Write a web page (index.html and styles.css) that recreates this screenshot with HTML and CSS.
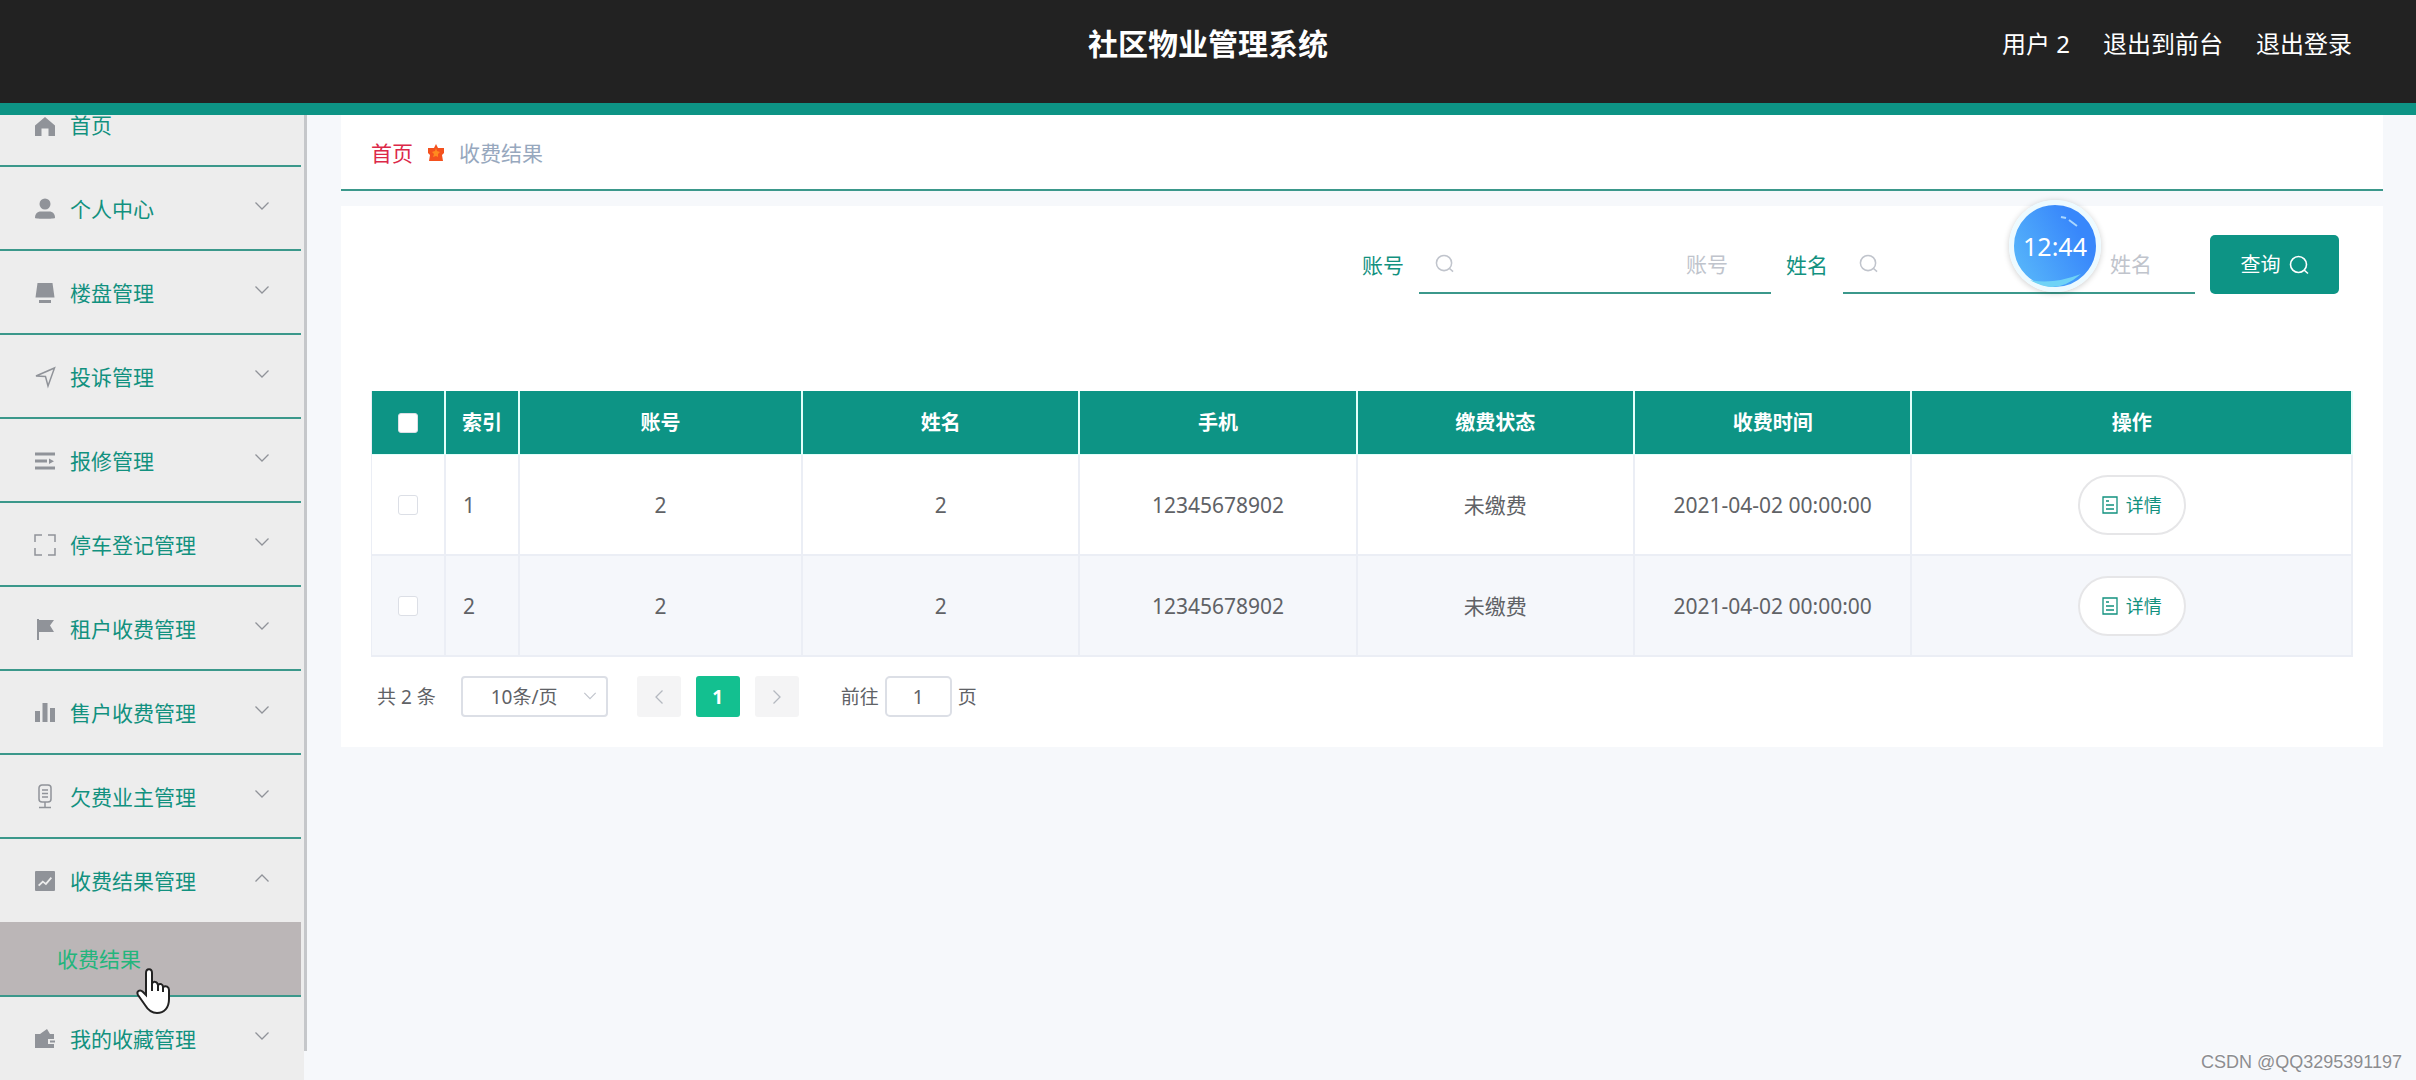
FILE: index.html
```html
<!DOCTYPE html>
<html lang="zh-CN">
<head>
<meta charset="utf-8">
<title>社区物业管理系统</title>
<link rel="stylesheet" href="styles.css">
</head>
<body>
<svg class="defs" aria-hidden="true">
  <symbol id="down" viewBox="0 0 16 16"><path d="M1.500 4.500 8 11l6.500-6.500" fill="none" stroke="currentColor" stroke-width="1.300"/></symbol>
  <symbol id="search" viewBox="0 0 20 20"><circle cx="9.500" cy="9.500" r="8" fill="none" stroke="currentColor" stroke-width="1.600"/><path d="m15 15 4 3.500" fill="none" stroke="currentColor" stroke-width="1.600"/></symbol>
  <symbol id="doc" viewBox="0 0 16 18"><path d="M1 1h14v16H1zM4 5h3M4 9h8M4 13h8" fill="none" stroke="currentColor" stroke-width="1.300"/></symbol>
</svg>
<header class="topbar">
  <h1 class="title">社区物业管理系统</h1>
  <nav class="user">
    <span>用户 2</span>
    <a href="#">退出到前台</a>
    <a href="#">退出登录</a>
  </nav>
</header>
<div class="layout">
  <aside class="sidebar">
    <nav class="menu">
      <a class="item" href="#"><svg class="icon" viewBox="0 0 20 20"><path d="M10 0 20 8.500V19h-6.500v-7.500h-7V19H0V8.500z"/></svg><span>首页</span></a>
      <a class="item" href="#"><svg class="icon" viewBox="0 0 20 20"><circle cx="10" cy="5" r="5.500"/><path d="M0 19c0-4 2-6.500 6-6.500h8c4 0 6 2.500 6 6.500 0 1-20 1-20 0z"/></svg><span>个人中心</span><svg class="arrow"><use href="#down"/></svg></a>
      <a class="item" href="#"><svg class="icon" viewBox="0 0 20 20"><path d="M2.500 0h15l2 14.500h-19zM4 17h12v3H4z"/></svg><span>楼盘管理</span><svg class="arrow"><use href="#down"/></svg></a>
      <a class="item" href="#"><svg class="icon line" viewBox="0 0 20 20"><path d="M1 9 19.500 1 13 19l-2.500-9.500z"/></svg><span>投诉管理</span><svg class="arrow"><use href="#down"/></svg></a>
      <a class="item" href="#"><svg class="icon" viewBox="0 0 20 20"><path d="M0 1.500h20v3H0zM0 8.500h12v3H0zM14 7.500l5 2.700-5 2.700zM0 15.500h20v3H0z"/></svg><span>报修管理</span><svg class="arrow"><use href="#down"/></svg></a>
      <a class="item" href="#"><svg class="icon line" viewBox="0 0 20 20"><path d="M0 7V0h7M13 0h7v7M20 13v7h-7M7 20H0v-7"/></svg><span>停车登记管理</span><svg class="arrow"><use href="#down"/></svg></a>
      <a class="item" href="#"><svg class="icon" viewBox="0 0 20 20"><path d="M2 0h2v1h15l-4 5.500L19 13H4v8H2z"/></svg><span>租户收费管理</span><svg class="arrow"><use href="#down"/></svg></a>
      <a class="item" href="#"><svg class="icon" viewBox="0 0 20 20"><path d="M0 8h5v11H0zM7.500 0h5v19h-5zM15 5h5v14h-5z"/></svg><span>售户收费管理</span><svg class="arrow"><use href="#down"/></svg></a>
      <a class="item" href="#"><svg class="icon line" viewBox="0 0 20 20"><rect x="4" y="-2" width="12" height="17" rx="3"/><path d="M7 3h6M7 6.500h6M7 10h6M10 15v5M4 20.500h12"/></svg><span>欠费业主管理</span><svg class="arrow"><use href="#down"/></svg></a>
      <a class="item open" href="#"><svg class="icon" viewBox="0 0 20 20"><path fill-rule="evenodd" d="M1 0h18q1 0 1 1v18q0 1-1 1H1q-1 0-1-1V1q0-1 1-1zM3 14l1.300 1.300 3.700-3.500 3 2.500 6-7-1.300-1.200-5 5.700-3-2.400z"/></svg><span>收费结果管理</span><svg class="arrow up"><use href="#down"/></svg></a>
      <a class="subitem" href="#">收费结果
        <svg class="cursor" viewBox="0 0 34 46"><path d="M10 27V5c0-5 6-5 6 0v11c1-3 5-3 6 1 2-2 5-1 5 2 3-2 6 0 6 3v9c0 9-5 14-12 14-6 0-9-3-12-8L2 27c-2-4 2-6 5-3z" fill="#fff" stroke="#222" stroke-width="2"/><path d="M16 15v8M22 17v6M27 19v5" stroke="#222" stroke-width="2"/></svg>
      </a>
      <a class="item" href="#"><svg class="icon" viewBox="0 0 20 20"><path d="M0 5h5l7-5 3 5h4v5h-6v5h6v4H0zM15 11.500h5v2h-5z"/></svg><span>我的收藏管理</span><svg class="arrow"><use href="#down"/></svg></a>
    </nav>
    <div class="scrollbar"></div>
  </aside>
  <main class="main">
    <nav class="crumbs">
      <a href="#">首页</a>
      <svg viewBox="0 0 18 18"><path d="m9 0 2 4h6v5l-2 2 1 6H2l1-6-2-2V4h6z" fill="#f4511e"/><path d="m9 4 1 3 3 1-2 2v3l-2-1-3 1 1-3-2-2 3-1z" fill="#ff8a1f"/></svg>
      <span>收费结果</span>
    </nav>
    <section class="card">
      <form class="search">
        <label for="account">账号</label>
        <div class="field"><svg><use href="#search"/></svg><input id="account" type="text" placeholder="账号"></div>
        <label for="name">姓名</label>
        <div class="field"><svg><use href="#search"/></svg><input id="name" type="text" placeholder="姓名">
          <div class="clock"><svg class="shine" viewBox="0 0 82 82"><path d="M16 75Q38 80 67 69Q52 82 38 82Q26 81 16 75z" fill="#6fd3f6"/><path d="m47 12 5 1M55 15l8 6" fill="none" stroke="#a9d6ff" stroke-width="2"/></svg><span>12:44</span></div></div>
        <button class="query" type="button">查询<svg><use href="#search"/></svg></button>
      </form>
      <table class="data">
        <colgroup><col class="c-narrow"><col class="c-narrow"><col class="c-account"><col class="c-mid"><col class="c-mid"><col class="c-mid"><col class="c-mid"><col></colgroup>
        <thead><tr><th><input type="checkbox" aria-label="全选"></th><th>索引</th><th>账号</th><th>姓名</th><th>手机</th><th>缴费状态</th><th>收费时间</th><th>操作</th></tr></thead>
        <tbody>
          <tr><td><input type="checkbox" aria-label="选择 1"></td><td class="index">1</td><td>2</td><td>2</td><td>12345678902</td><td>未缴费</td><td>2021-04-02 00:00:00</td><td><button class="detail" type="button"><svg><use href="#doc"/></svg>详情</button></td></tr>
          <tr><td><input type="checkbox" aria-label="选择 2"></td><td class="index">2</td><td>2</td><td>2</td><td>12345678902</td><td>未缴费</td><td>2021-04-02 00:00:00</td><td><button class="detail" type="button"><svg><use href="#doc"/></svg>详情</button></td></tr>
        </tbody>
      </table>
      <div class="pager">
        <span>共 2 条</span>
        <div class="size"><select aria-label="每页条数"><option>10条/页</option></select><svg><use href="#down"/></svg></div>
        <div class="pages">
          <button type="button" aria-label="上一页"><svg class="left"><use href="#down"/></svg></button>
          <button type="button" class="current">1</button>
          <button type="button" aria-label="下一页"><svg class="right"><use href="#down"/></svg></button>
        </div>
        <div class="jump"><label for="page">前往</label><input id="page" type="text" value="1"><span>页</span></div>
      </div>
    </section>
  </main>
</div>
<div class="watermark">CSDN @QQ3295391197</div>
</body>
</html>
```
FILE: styles.css
```css
* { box-sizing: border-box; }
body {
  margin: 0;
  height: 100vh;
  display: flex;
  flex-direction: column;
  background: #f6f8fb;
  color: #606266;
  font: 21px/30px "Noto Sans", "Noto Sans CJK SC", sans-serif;
}
a { color: inherit; text-decoration: none; }
button, input, select { font: inherit; color: inherit; margin: 0; }
.defs { display: none; }

.topbar {
  flex: none;
  height: 115px;
  padding: 0 64px 16px;
  display: grid;
  grid-template-columns: 1fr auto 1fr;
  align-items: center;
  background: #222;
  border-bottom: 12px solid #0d9485;
  color: #fff;
}
.title { grid-column: 2; margin: 0; font-size: 30px; font-weight: 700; }
.user { display: flex; justify-content: flex-end; gap: 33px; font-size: 24px; }

.layout { flex: 1; min-height: 0; display: flex; }
.sidebar { flex: none; width: 307px; display: flex; }
.menu { flex: 1; padding-right: 3px; background: #ededed; }
.item {
  height: 84px;
  display: flex;
  align-items: center;
  padding: 1px 32px 0 35px;
  border-bottom: 2px solid #3b988b;
  color: #12917f;
}
.item:first-child { height: 52px; align-items: flex-start; padding-top: 0; line-height: 20px; }
.item.open { height: 83px; border-bottom: 0; }
.item:last-child { height: 83px; border-bottom: 0; }
.icon { width: 20px; height: 20px; margin-right: 15px; fill: #909399; overflow: visible; }
.item:first-child .icon { margin-top: 2px; }
.icon.line { fill: none; stroke: #909399; stroke-width: 1.5; }
.arrow { width: 16px; height: 16px; margin: 0 -1px 6px auto; color: #909399; }
.up { transform: rotate(180deg); }
.subitem {
  position: relative;
  height: 75px;
  display: flex;
  align-items: center;
  padding-left: 57px;
  background: #bbb6b7;
  border-bottom: 2px solid #3b988b;
  color: #23b57c;
}
.cursor { position: absolute; left: 136px; top: 46px; width: 34px; height: 46px; z-index: 2; }
.scrollbar { width: 3px; margin-bottom: 29px; background: #c5c7ca; }

.main { flex: 1; min-width: 0; padding: 0 33px 0 34px; }
.crumbs {
  height: 76px;
  padding: 2px 30px 0;
  display: flex;
  align-items: center;
  gap: 14px;
  background: #fff;
  border-bottom: 2px solid #3b988b;
  color: #97a8be;
}
.crumbs a { color: #dc2848; }
.crumbs svg { width: 18px; height: 18px; }
.card { margin-top: 15px; padding: 29px 30px 30px; background: #fff; }

.search { display: flex; align-items: center; justify-content: flex-end; gap: 15px; padding-right: 14px; color: #12917f; }
.field { position: relative; width: 352px; height: 59px; display: flex; align-items: center; border-bottom: 2px solid #3b988b; }
.field > svg { flex: none; width: 19px; height: 19px; margin-left: 16px; color: #c0c4cc; }
.field input { flex: 1; min-width: 0; height: 57px; padding: 0 43px 0 16px; border: 0; outline: 0; background: none; text-align: right; }
.field input::placeholder { color: #c0c4cc; opacity: 1; }
.clock {
  position: absolute;
  left: 166px;
  top: -35px;
  width: 92px;
  height: 92px;
  border: 5px solid #edfaff;
  border-radius: 50%;
  background: linear-gradient(60deg, #5bbcfa, #3887fb 75%);
  box-shadow: 0 1px 6px #0003;
  color: #fff;
  font-size: 25px;
  line-height: 82px;
  text-align: center;
}
.clock span { position: relative; }
.shine { position: absolute; left: 0; top: 0; width: 82px; height: 82px; }
.query {
  width: 129px;
  height: 59px;
  display: flex;
  align-items: center;
  justify-content: center;
  gap: 8px;
  border: 0;
  border-radius: 5px;
  background: #0d9485;
  color: #fff;
  font-size: 20px;
}
.query svg { width: 20px; height: 20px; }

.data { width: 100%; margin-top: 97px; border-collapse: separate; border-spacing: 0; table-layout: fixed; border-left: 1px solid #ebeef5; text-align: center; }
.c-narrow { width: 74px; }
.c-account { width: 283px; }
.c-mid { width: 14%; }
.data th { height: 64px; padding: 0; background: #0d9485; border: solid #e2fffa; border-width: 0 2px 1px 0; color: #fff; font-size: 20px; }
.data td { height: 101px; padding: 0; border: solid #ebeef5; border-width: 0 2px 2px 0; }
.data .index { padding-left: 17px; text-align: left; }
.data tr:nth-child(2) td { background: #f5f7fb; }
.data input { appearance: none; display: block; width: 20px; height: 20px; margin: 0 auto; border: 1px solid #dcdfe6; border-radius: 3px; background: #fff; }
.detail {
  width: 108px;
  height: 60px;
  display: flex;
  align-items: center;
  justify-content: center;
  gap: 8px;
  margin: 0 auto;
  padding: 0;
  border: 2px solid #e6e6e8;
  border-radius: 30px;
  background: #fff;
  color: #12917f;
  font-size: 18px;
}
.detail svg { width: 16px; height: 18px; }

.pager { display: flex; align-items: center; margin-top: 19px; padding-left: 6px; font-size: 19px; }
.size { position: relative; width: 147px; margin: 0 29px 0 25px; }
.size select { appearance: none; display: block; width: 100%; height: 41px; padding: 0 28px; border: 2px solid #dcdfe6; border-radius: 4px; background: #fff; }
.size svg { position: absolute; right: 11px; top: 13px; width: 14px; height: 14px; color: #c0c4cc; }
.pages { display: flex; gap: 15px; }
.pages button { width: 44px; height: 41px; padding: 0; border: 0; border-radius: 3px; background: #f4f4f5; color: #b4b8c0; }
.pages .current { background: #13c090; color: #fff; font-weight: 700; }
.pages svg { display: block; margin: auto; width: 16px; height: 16px; }
.left { transform: rotate(90deg); }
.right { transform: rotate(-90deg); }
.jump { display: flex; align-items: center; gap: 6px; margin-left: 42px; }
.jump input { width: 67px; height: 41px; padding: 0; border: 2px solid #dcdfe6; border-radius: 5px; text-align: center; }

.watermark {
  position: absolute;
  right: 14px;
  bottom: 3px;
  color: #8c8d90;
  font: 18px/30px "Liberation Sans", sans-serif;
  text-shadow: 0 -1px 1px #fff;
}
```
